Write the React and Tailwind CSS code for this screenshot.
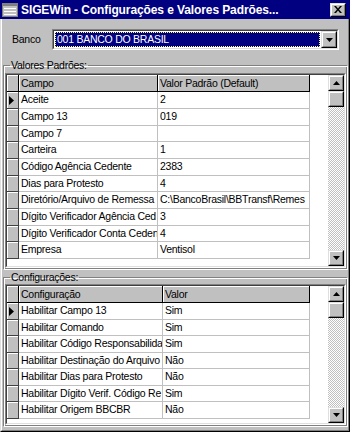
import React from "react";

const font = "font-['Liberation_Sans',Arial,sans-serif]";

const rows1 = [
  ["Aceite", "2"],
  ["Campo 13", "019"],
  ["Campo 7", ""],
  ["Carteira", "1"],
  ["Código Agência Cedente", "2383"],
  ["Dias para Protesto", "4"],
  ["Diretório/Arquivo de Remessa", "C:\\BancoBrasil\\BBTransf\\Remes"],
  ["Dígito Verificador Agência Ced", "3"],
  ["Dígito Verificador Conta Ceden", "4"],
  ["Empresa", "Ventisol"],
];
const h1 = [17, 17, 16, 17, 17, 16, 17, 17, 16, 17];

const rows2 = [
  ["Habilitar Campo 13", "Sim"],
  ["Habilitar Comando", "Sim"],
  ["Habilitar Código Responsabilida", "Sim"],
  ["Habilitar Destinação do Arquivo", "Não"],
  ["Habilitar Dias para Protesto", "Não"],
  ["Habilitar Dígito Verif. Código Re", "Sim"],
  ["Habilitar Origem BBCBR", "Não"],
];
const h2 = [17, 16, 17, 16, 17, 16, 17];

function Raised({ className = "", children }) {
  return (
    <div className={"border border-t-[#dfdfdf] border-l-[#dfdfdf] border-r-black border-b-black " + className}>
      <div className="w-full h-full border border-t-white border-l-white border-r-[#808080] border-b-[#808080] bg-[#c0c0c0] flex items-center justify-center">
        {children}
      </div>
    </div>
  );
}

function Arrow({ up }) {
  return (
    <svg width="7" height="4" viewBox="0 0 7 4">
      {up ? <path d="M3.5 0 L7 4 L0 4 Z" fill="#000" /> : <path d="M0 0 L7 0 L3.5 4 Z" fill="#000" />}
    </svg>
  );
}

function ScrollBar() {
  return (
    <div className="w-[16px] flex flex-col">
      <Raised className="h-[16px] w-[16px]">
        <Arrow up />
      </Raised>
      <Raised className="h-[16px] w-[16px]" />
      <div className="flex-1 bg-[image:repeating-conic-gradient(#ffffff_0%_25%,#c0c0c0_0%_50%)] bg-size-[2px_2px]" />
      <Raised className="h-[16px] w-[16px]">
        <Arrow />
      </Raised>
    </div>
  );
}

function Grid({ heightClass, w1, w2, headers, rows, heights }) {
  return (
    <div className={"w-full border border-t-[#808080] border-l-[#808080] border-r-white border-b-white " + heightClass}>
      <div className="w-full h-full border border-t-[#404040] border-l-[#404040] border-r-[#dfdfdf] border-b-[#dfdfdf] bg-white flex">
        <div className="flex-1 flex flex-col overflow-hidden">
          <div className="flex h-[17px]">
            <div className="w-[12px] shrink-0 bg-[#c0c0c0] border-r border-b border-black shadow-[inset_1px_1px_0_#fff]" />
            <div className={"shrink-0 bg-[#c0c0c0] border-r border-b border-black shadow-[inset_1px_1px_0_#fff] pl-[2px] leading-[16px] whitespace-nowrap overflow-hidden " + w1}>
              {headers[0]}
            </div>
            <div className={"shrink-0 bg-[#c0c0c0] border-r border-b border-black shadow-[inset_1px_1px_0_#fff] pl-[2px] leading-[16px] whitespace-nowrap overflow-hidden " + w2}>
              {headers[1]}
            </div>
          </div>
          {rows.map((r, i) => (
            <div key={i} className={"flex " + (heights[i] === 17 ? "h-[17px]" : "h-[16px]")}>
              <div className="w-[12px] shrink-0 bg-[#c0c0c0] border-r border-b border-[#404040] shadow-[inset_1px_1px_0_#fff] flex items-center pl-[2px]">
                {i === 0 && (
                  <svg width="5" height="9" viewBox="0 0 5 9">
                    <path d="M0 0 L5 4.5 L0 9 Z" fill="#000" />
                  </svg>
                )}
              </div>
              <div className={"shrink-0 border-r border-b border-[#c0c0c0] pl-[2px] flex items-center whitespace-nowrap overflow-hidden " + w1}>
                {r[0]}
              </div>
              <div className={"shrink-0 border-r border-b border-[#c0c0c0] pl-[2px] flex items-center whitespace-nowrap overflow-hidden " + w2}>
                {r[1]}
              </div>
            </div>
          ))}
        </div>
        <ScrollBar />
      </div>
    </div>
  );
}

export default function App() {
  return (
    <div className={"w-[350px] h-[432px] bg-[#c0c0c0] flex flex-col text-[10.5px] tracking-[-0.25px] text-black " + font}>
      <div className="h-[19px] shrink-0 bg-[#000080] flex items-center pl-[2px] pr-[4px]">
        <svg width="16" height="14" viewBox="0 0 16 14" className="shrink-0">
          <rect x="0.5" y="0.5" width="15" height="13" fill="#c0c0c0" stroke="#808080" />
          <rect x="1" y="1" width="14" height="2" fill="#808080" />
          <line x1="2" y1="5.5" x2="14" y2="5.5" stroke="#fff" />
          <line x1="2" y1="8.5" x2="14" y2="8.5" stroke="#fff" />
          <line x1="2" y1="11.5" x2="14" y2="11.5" stroke="#fff" />
        </svg>
        <div className="ml-[3px] text-white font-bold text-[12px] tracking-[-0.1px] leading-none whitespace-nowrap">
          SIGEWin - Configurações e Valores Padrões...
        </div>
        <div className="flex-1" />
        <Raised className="w-[16px] h-[14px]">
          <svg width="8" height="7" viewBox="0 0 8 7">
            <path d="M0 0 L2 0 L4 2.5 L6 0 L8 0 L5 3.5 L8 7 L6 7 L4 4.5 L2 7 L0 7 L3 3.5 Z" fill="#000" />
          </svg>
        </Raised>
      </div>
      <div className="flex-1 flex flex-col border-l border-l-[#dfdfdf] border-r border-r-black border-b border-b-black">
        <div className="flex-1 flex flex-col border-l border-l-white border-r border-r-[#808080] border-b border-b-[#808080]">
          <div className="flex items-center mt-[10px] pl-[10px] shrink-0">
            <div className="w-[40px]">Banco</div>
            <div className="w-[287px] h-[21px] border border-t-[#808080] border-l-[#808080] border-r-white border-b-white">
              <div className="w-full h-full border border-t-[#404040] border-l-[#404040] border-r-[#dfdfdf] border-b-[#dfdfdf] bg-white flex">
                <div className="flex-1 p-[1px] flex">
                  <div className="flex-1 bg-[#000080] border border-dotted border-[#ffff80] text-white flex items-center pl-[1px] whitespace-nowrap">
                    001 BANCO DO BRASIL
                  </div>
                </div>
                <Raised className="w-[16px] h-full">
                  <Arrow />
                </Raised>
              </div>
            </div>
          </div>

          <fieldset className="shrink-0 mt-[9px] ml-[1px] border border-t-[#808080] border-l-[#808080] border-r-white border-b-white shadow-[inset_1px_1px_0_#fff,inset_-1px_-1px_0_#808080] px-[1px] pt-[1px] pb-[1px]">
            <legend className="ml-[5px] px-[1px] leading-[13px]">Valores Padrões:</legend>
            <Grid
              heightClass="h-[195px]"
              w1="w-[139px]"
              w2="w-[152px]"
              headers={["Campo", "Valor Padrão (Default)"]}
              rows={rows1}
              heights={h1}
            />
          </fieldset>

          <fieldset className="shrink-0 mt-[1px] ml-[1px] border border-t-[#808080] border-l-[#808080] border-r-white border-b-white shadow-[inset_1px_1px_0_#fff,inset_-1px_-1px_0_#808080] px-[1px] pt-0 pb-[1px]">
            <legend className="ml-[5px] px-[1px] leading-[13px]">Configurações:</legend>
            <Grid
              heightClass="h-[141px]"
              w1="w-[144px]"
              w2="w-[147px]"
              headers={["Configuração", "Valor"]}
              rows={rows2}
              heights={h2}
            />
          </fieldset>
        </div>
      </div>
    </div>
  );
}
